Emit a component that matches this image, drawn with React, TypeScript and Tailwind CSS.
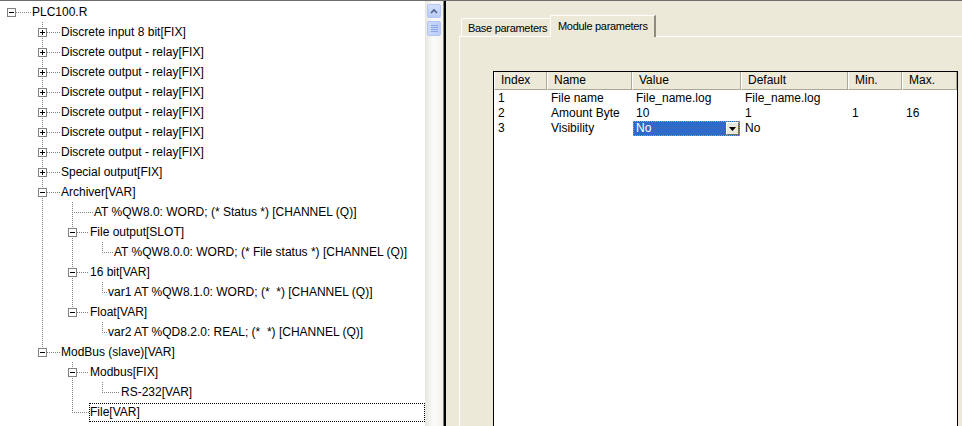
import React from 'react';

type Row = { l: number; t: string; x: number; b?: '+' | '-'; focus?: boolean };

const rows: Row[] = [
  { l: 0, t: 'PLC100.R', x: 32, b: '-' },
  { l: 1, t: 'Discrete input 8 bit[FIX]', x: 61, b: '+' },
  { l: 1, t: 'Discrete output - relay[FIX]', x: 61, b: '+' },
  { l: 1, t: 'Discrete output - relay[FIX]', x: 61, b: '+' },
  { l: 1, t: 'Discrete output - relay[FIX]', x: 61, b: '+' },
  { l: 1, t: 'Discrete output - relay[FIX]', x: 61, b: '+' },
  { l: 1, t: 'Discrete output - relay[FIX]', x: 61, b: '+' },
  { l: 1, t: 'Discrete output - relay[FIX]', x: 61, b: '+' },
  { l: 1, t: 'Special output[FIX]', x: 61, b: '+' },
  { l: 1, t: 'Archiver[VAR]', x: 61, b: '-' },
  { l: 2, t: 'AT %QW8.0: WORD; (* Status *) [CHANNEL (Q)]', x: 94 },
  { l: 2, t: 'File output[SLOT]', x: 90, b: '-' },
  { l: 3, t: 'AT %QW8.0.0: WORD; (* File status *) [CHANNEL (Q)]', x: 114 },
  { l: 2, t: '16 bit[VAR]', x: 90, b: '-' },
  { l: 3, t: 'var1 AT %QW8.1.0: WORD; (*  *) [CHANNEL (Q)]', x: 108 },
  { l: 2, t: 'Float[VAR]', x: 90, b: '-' },
  { l: 3, t: 'var2 AT %QD8.2.0: REAL; (*  *) [CHANNEL (Q)]', x: 108 },
  { l: 1, t: 'ModBus (slave)[VAR]', x: 61, b: '-' },
  { l: 2, t: 'Modbus[FIX]', x: 90, b: '-' },
  { l: 3, t: 'RS-232[VAR]', x: 121 },
  { l: 2, t: 'File[VAR]', x: 90, focus: true },
];

const LX = [11, 42, 72, 102];

function hasNext(i: number, level: number) {
  for (let j = i + 1; j < rows.length; j++) {
    if (rows[j].l < level) return false;
    if (rows[j].l === level) return true;
  }
  return false;
}

function Gutter({ i }: { i: number }) {
  const r = rows[i];
  const w = r.focus ? r.x - 1 : r.x;
  const lx = LX[r.l];
  const dot = { stroke: '#808080', strokeWidth: 1, strokeDasharray: '1 1' };
  const parts: React.ReactNode[] = [];
  for (let a = 1; a < r.l; a++) {
    if (hasNext(i, a)) parts.push(<line key={'a' + a} x1={LX[a] + 0.5} y1={0} x2={LX[a] + 0.5} y2={20} {...dot} />);
  }
  if (r.l >= 1) {
    parts.push(<line key="vt" x1={lx + 0.5} y1={0} x2={lx + 0.5} y2={hasNext(i, r.l) ? 20 : 11} {...dot} />);
  }
  const hx1 = r.b ? lx + 5 : lx + 2;
  const hx2 = r.focus ? r.x - 1 : r.x - 1;
  parts.push(<line key="h" x1={hx1} y1={10.5} x2={hx2} y2={10.5} {...dot} />);
  if (r.b) {
    parts.push(<rect key="bx" x={lx - 4 + 0.5} y={6.5} width={8} height={8} fill="#fff" stroke="#808080" strokeWidth={1} />);
    parts.push(<line key="m" x1={lx - 2} y1={10.5} x2={lx + 3} y2={10.5} stroke="#000" strokeWidth={1} />);
    if (r.b === '+') parts.push(<line key="p" x1={lx + 0.5} y1={8} x2={lx + 0.5} y2={13} stroke="#000" strokeWidth={1} />);
  }
  return (
    <svg width={w} height={20} className="shrink-0 block" shapeRendering="crispEdges">
      {parts}
    </svg>
  );
}

function Tree() {
  return (
    <div className="w-[425px] shrink-0 bg-white pt-px flex flex-col">
      {rows.map((r, i) => (
        <div key={i} className="flex h-[20px] shrink-0">
          <Gutter i={i} />
          {r.focus ? (
            <span className="flex-1 mt-px h-[19px] border border-dotted border-black leading-[17px] whitespace-pre">{r.t}</span>
          ) : (
            <span className="leading-[20px] whitespace-pre">{r.t}</span>
          )}
        </div>
      ))}
    </div>
  );
}

function ScrollBar() {
  return (
    <div className="w-[18px] shrink-0 pt-[3px] pl-[2px] flex flex-col gap-[3px] bg-[linear-gradient(to_right,#e6e5de,#fbfbf9_45%,#f3f2ec)]">
      <div className="w-[14px] h-[14px] rounded-[2px] border border-[#b3c6f4] bg-[linear-gradient(to_bottom,#d3e0fd,#b9cbf8)] flex items-center justify-center">
        <svg width="8" height="6" viewBox="0 0 8 6">
          <path d="M1 5 L4 2 L7 5" fill="none" stroke="#4d6185" strokeWidth="1.6" />
        </svg>
      </div>
      <div className="w-[14px] h-[15px] rounded-[2px] border border-[#b3c6f4] bg-[linear-gradient(to_right,#cbdafd,#bccdf8)] flex flex-col items-center justify-center gap-[1px]">
        <div className="w-[7px] h-px bg-[#8ea5e4]" />
        <div className="w-[7px] h-px bg-[#8ea5e4]" />
        <div className="w-[7px] h-px bg-[#8ea5e4]" />
        <div className="w-[7px] h-px bg-[#8ea5e4]" />
      </div>
    </div>
  );
}

const cols = [
  { h: 'Index', w: 'w-[53px]' },
  { h: 'Name', w: 'w-[85px]' },
  { h: 'Value', w: 'w-[109px]' },
  { h: 'Default', w: 'w-[107px]' },
  { h: 'Min.', w: 'w-[54px]' },
  { h: 'Max.', w: 'w-[55px]' },
];

const data = [
  ['1', 'File name', 'File_name.log', 'File_name.log', '', ''],
  ['2', 'Amount Byte', '10', '1', '1', '16'],
  ['3', 'Visibility', '__DD__', 'No', '', ''],
];

function Table() {
  return (
    <div className="w-[465px] flex-1 border-l border-t border-r border-black bg-white flex flex-col">
      <div className="flex h-[18px] shrink-0">
        {cols.map((c) => (
          <div
            key={c.h}
            className={`${c.w} shrink-0 h-[18px] bg-[#ECE9D8] border-l border-l-white border-r border-r-[#aca899] border-b border-b-[#aca899] pl-[6px] leading-[16px]`}
          >
            {c.h}
          </div>
        ))}
      </div>
      <div className="pt-px flex flex-col">
        {data.map((row, ri) => (
          <div key={ri} className="flex h-[15px]">
            {row.map((cell, ci) =>
              cell === '__DD__' ? (
                <div key={ci} className={`${cols[ci].w} shrink-0 px-px`}>
                  <div className="h-[15px] bg-[#316AC5] border border-dotted border-[#d09a3e] flex items-stretch">
                    <span className="flex-1 pl-[2px] text-white leading-[13px]">No</span>
                    <div className="w-[13px] bg-[#ECE9D8] border-t border-l border-t-white border-l-white border-b border-r border-b-[#716f64] border-r-[#716f64] flex items-center justify-center">
                      <svg width="7" height="4" viewBox="0 0 7 4">
                        <path d="M0 0 H7 L3.5 4 Z" fill="#000" />
                      </svg>
                    </div>
                  </div>
                </div>
              ) : (
                <div key={ci} className={`${cols[ci].w} shrink-0 pl-[4px] leading-[15px] whitespace-pre`}>
                  {cell}
                </div>
              )
            )}
          </div>
        ))}
      </div>
    </div>
  );
}

function RightPanel() {
  return (
    <div className="flex-1 bg-[#ECE9D8] pt-[14px] pl-[13px] flex flex-col min-w-0">
      <div className="relative z-10 flex items-end h-[21px] pl-[2px] shrink-0 text-[11px] tracking-[-0.3px]">
        <div className="w-[89px] h-[18px] border-l border-t border-white rounded-tl-[2px] pl-[6px] pt-px leading-[16px]">
          Base parameters
        </div>
        <div className="w-[106px] h-[22px] -mb-px bg-[#ECE9D8] border-l border-t border-white border-r-2 border-r-[#8e8b7e] rounded-tl-[2px] pl-[7px] pt-[2px] leading-[16px]">
          Module parameters
        </div>
      </div>
      <div className="flex-1 border-t border-l border-white pl-[33px] pt-[34px] flex flex-col min-h-0">
        <Table />
      </div>
    </div>
  );
}

export default function App() {
  return (
    <div className="w-[962px] h-[426px] overflow-hidden flex border-t border-[#6d6d6d] font-['Liberation_Sans',Arial,sans-serif] text-[12px] text-black">
      <Tree />
      <ScrollBar />
      <div className="w-[3px] shrink-0 bg-black border-l border-[#808080]" />
      <RightPanel />
    </div>
  );
}
